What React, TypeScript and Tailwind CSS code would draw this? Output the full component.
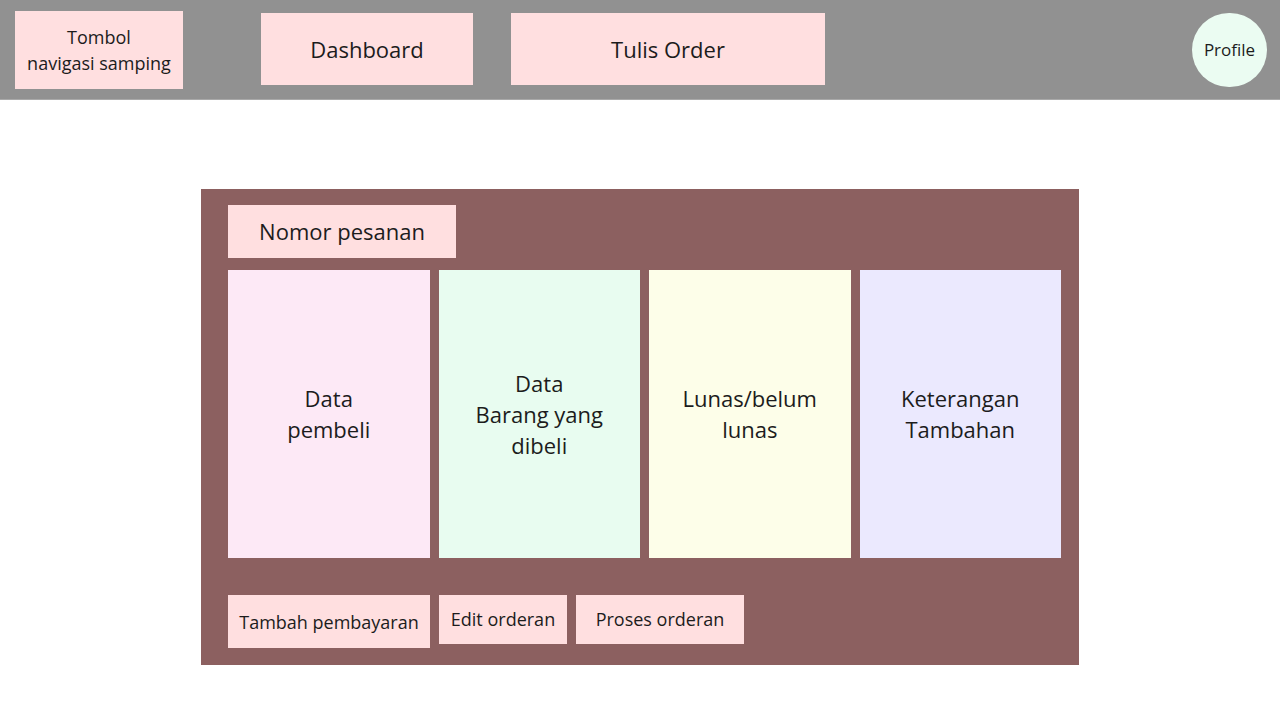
import React from "react";

const font = { fontFamily: '"Open Sans", "Noto Sans", sans-serif' };

const cards = [
    { lines: ["Data", "pembeli"], bg: "bg-[#fde9f6]" },
    { lines: ["Data", "Barang yang", "dibeli"], bg: "bg-[#e8fcf0]" },
    { lines: ["Lunas/belum", "lunas"], bg: "bg-[#fdfee9]" },
    { lines: ["Keterangan", "Tambahan"], bg: "bg-[#ebe9fe]" },
];

const App = () => {
    return (
        <div className="w-[1280px] h-[720px] bg-white text-[#1c1c1c] overflow-hidden" style={font}>
            <header className="h-[100px] bg-[#919191] border-b border-[#a9a9a9] flex items-start relative">
                <div className="ml-[15px] mt-[11px] w-[168px] h-[78px] bg-[#ffdfe0] flex flex-col items-center justify-center text-[18px] leading-[26px]">
                    <span>Tombol</span>
                    <span>navigasi samping</span>
                </div>
                <div className="ml-[78px] mt-[13px] w-[212px] h-[72px] bg-[#ffdfe0] flex items-center justify-center text-[22px]">
                    Dashboard
                </div>
                <div className="ml-[38px] mt-[13px] w-[314px] h-[72px] bg-[#ffdfe0] flex items-center justify-center text-[22px]">
                    Tulis Order
                </div>
                <div className="ml-auto mr-[13px] mt-[13px] w-[75px] h-[74px] rounded-full bg-[#ebfcf2] flex items-center justify-center text-[17px]">
                    Profile
                </div>
            </header>

            <main className="ml-[201px] mt-[89px] w-[878px] h-[476px] bg-[#8c6060] pl-[27px] pr-[18px] pt-[16px] flex flex-col">
                <div className="w-[228px] h-[53px] bg-[#ffdfe0] flex items-center justify-center text-[22px]">
                    Nomor pesanan
                </div>
                <div className="mt-[12px] grid grid-cols-4 gap-[9px] h-[288px]">
                    {cards.map((c, i) => (
                        <div key={i} className={`${c.bg} flex flex-col items-center justify-center text-[22px] leading-[31px] text-center`}>
                            {c.lines.map((l) => (
                                <span key={l}>{l}</span>
                            ))}
                        </div>
                    ))}
                </div>
                <div className="mt-[37px] flex items-start gap-[9px]">
                    <div className="w-[202px] h-[53px] bg-[#ffdfe0] flex items-center justify-center text-[18px] pt-[2px]">
                        Tambah pembayaran
                    </div>
                    <div className="w-[128px] h-[49px] bg-[#ffdfe0] flex items-center justify-center text-[18px]">
                        Edit orderan
                    </div>
                    <div className="w-[168px] h-[49px] bg-[#ffdfe0] flex items-center justify-center text-[18px]">
                        Proses orderan
                    </div>
                </div>
            </main>
        </div>
    );
};

export default App;
